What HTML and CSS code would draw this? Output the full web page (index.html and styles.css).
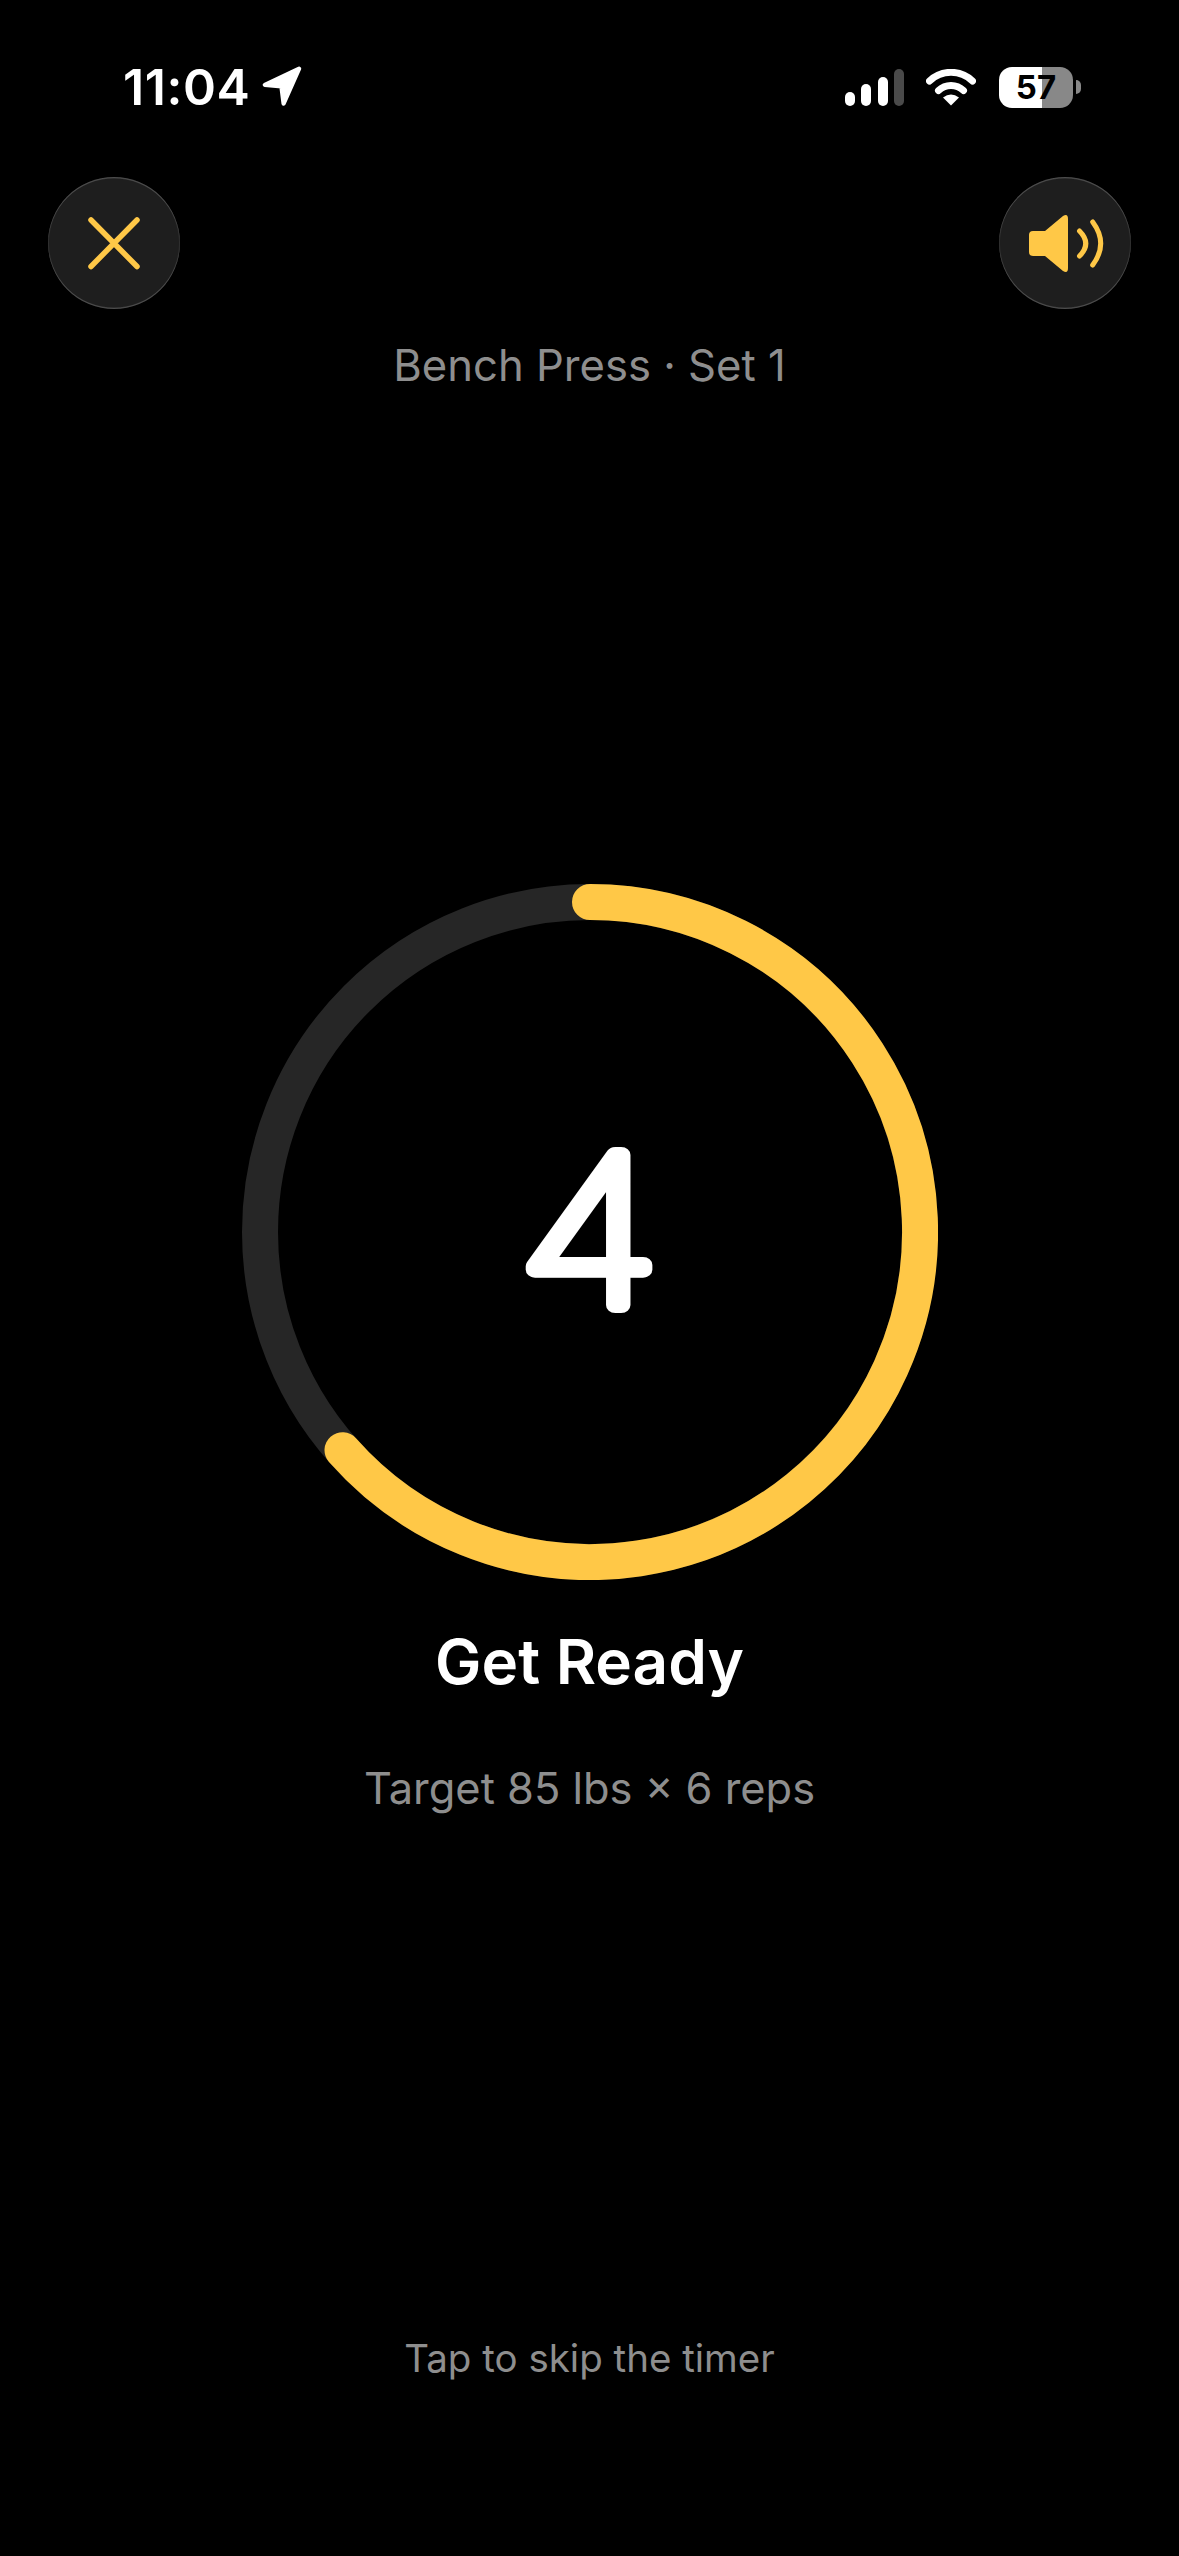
FILE: index.html
```html
<!DOCTYPE html>
<html lang="en">
<head>
<meta charset="utf-8">
<title>Get Ready</title>
<link rel="stylesheet" href="styles.css">
</head>
<body>
<main class="screen">
  <header class="status">
    <div class="status-left">
      <span class="time">11:04</span>
      <svg class="loc" viewBox="0 0 42 42"><path d="M36.500 3.500 4.500 18.500 20 20 22 36Z"/></svg>
    </div>
    <div class="status-right">
      <div class="signal"><i class="b1"></i><i class="b2"></i><i class="b3"></i><i class="b4"></i></div>
      <svg class="wifi" viewBox="0 0 50 37"><path class="wifi-arc" d="M3.500 12A31 31 0 0 1 46.500 12"/><path class="wifi-arc" d="M12.500 21.500A18 18 0 0 1 37.500 21.500"/><path d="M25 36.500 17 28.500Q25 22.500 33 28.500Z"/></svg>
      <div class="battery"><div class="cell">57</div><div class="nub"></div></div>
    </div>
  </header>

  <div class="controls">
    <button class="round">
      <svg viewBox="0 0 132 132"><path class="x" d="M43 43 89 89.500M89 43 43 89.500"/></svg>
    </button>
    <button class="round">
      <svg viewBox="0 0 132 132"><path class="spk" d="M34 54H46L64 39Q69 36 69 42V91Q69 97 64 94L46 79H34Q30 79 30 75V58Q30 54 34 54Z"/><path class="wave" d="M80.500 54Q93 66.500 80.500 79M93.700 45Q109.700 66.500 93.700 88"/></svg>
    </button>
  </div>

  <p class="exercise">Bench Press · Set 1</p>

  <svg class="ring" viewBox="0 0 696 696">
    <circle class="track" cx="348" cy="348" r="330"/>
    <path class="progress" d="M348 18A330 330 0 1 1 100.500 566.200"/>
    <text class="count" x="347" y="421">4</text>
  </svg>

  <h1 class="title">Get Ready</h1>
  <p class="target">Target 85 lbs × 6 reps</p>
  <p class="skip">Tap to skip the timer</p>
</main>
</body>
</html>
```
FILE: styles.css
```css
* { box-sizing: border-box; margin: 0; padding: 0; }
html, body { background: #000; }
.screen {
  width: 1179px;
  height: 2556px;
  background: #000;
  color: #fff;
  font-family: Inter, "Liberation Sans", sans-serif;
  display: flex;
  flex-direction: column;
  align-items: center;
  overflow: hidden;
}
.status {
  width: 100%;
  height: 177px;
  padding: 64px 98px 0 123px;
  display: flex;
  justify-content: space-between;
  align-items: flex-start;
}
.status-left { display: flex; align-items: center; gap: 9px; height: 46px; }
.time { font-size: 50px; font-weight: 600; line-height: 46px; letter-spacing: .6px; }
.loc { width: 45px; height: 45px; fill: #fff; stroke: #fff; stroke-width: 4px; stroke-linejoin: round; }
.status-right { display: flex; align-items: center; gap: 22px; height: 46px; }
.signal { display: flex; align-items: flex-end; gap: 6.500px; height: 37px; }
.signal i { display: block; width: 10px; border-radius: 5px; background: #fff; }
.signal .b1 { height: 14px; }
.signal .b2 { height: 22px; }
.signal .b3 { height: 29px; }
.signal .b4 { height: 37px; background: #4a4a4a; }
.wifi { width: 50px; height: 37px; fill: #fff; }
.wifi-arc { fill: none; stroke: #fff; stroke-width: 7px; stroke-linecap: round; }
.battery { display: flex; align-items: center; gap: 3px; margin-left: 1px; }
.cell {
  width: 74px;
  height: 41px;
  border-radius: 13px;
  background: linear-gradient(90deg, #fff 0 58%, #888 58% 100%);
  color: #000;
  font-size: 33px;
  font-weight: 700;
  line-height: 41px;
  text-align: center;
}
.nub { width: 5px; height: 14px; background: #888; border-radius: 0 5px 5px 0; }
.controls {
  width: 100%;
  padding: 0 48px;
  display: flex;
  justify-content: space-between;
}
.round {
  width: 132px;
  height: 132px;
  border: 0;
  border-radius: 50%;
  background: #1e1e1e;
  box-shadow: inset 0 1.500px 0 rgba(255, 255, 255, .14), inset 0 -1.500px 0 rgba(255, 255, 255, .14), inset 0 0 0 1px rgba(255, 255, 255, .08);
  display: flex;
}
.round svg { width: 132px; height: 132px; }
.x { fill: none; stroke: #ffc847; stroke-width: 5.500px; stroke-linecap: round; }
.spk { fill: #ffc847; }
.wave { fill: none; stroke: #ffc847; stroke-width: 5px; stroke-linecap: round; }
.exercise {
  margin-top: 31px;
  font-size: 43.600px;
  line-height: 52px;
  color: #8e8e8e;
}
.ring { width: 696px; height: 696px; margin-top: 492px; flex: none; }
.track { fill: none; stroke: #262626; stroke-width: 36px; }
.progress { fill: none; stroke: #ffc847; stroke-width: 36px; stroke-linecap: round; }
.count {
  font-size: 206px;
  font-weight: 100;
  fill: #fff;
  stroke: #fff;
  stroke-width: 16px;
  stroke-linejoin: round;
  text-anchor: middle;
  font-family: Inter, sans-serif;
  transform: scaleX(1.17);
  transform-box: fill-box;
  transform-origin: center;
}
.title {
  margin-top: 44px;
  font-size: 62px;
  line-height: 76px;
  font-weight: 600;
}
.target {
  margin-top: 62px;
  font-size: 43.400px;
  line-height: 52px;
  color: #8e8e8e;
}
.skip {
  margin-top: 521px;
  font-size: 38.500px;
  line-height: 46px;
  color: #8e8e8e;
}
```
